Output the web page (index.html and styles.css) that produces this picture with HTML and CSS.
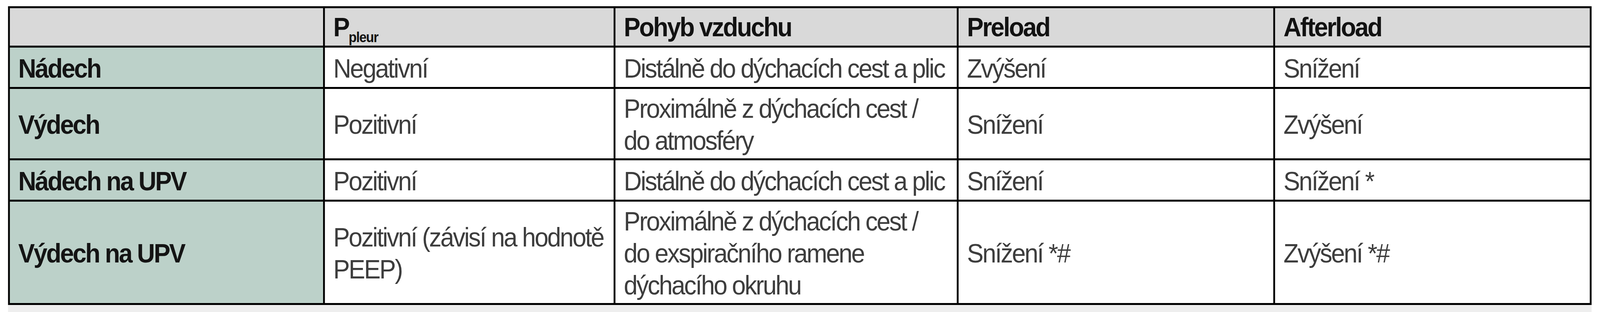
FILE: index.html
```html
<!DOCTYPE html>
<html lang="cs">
<head>
<meta charset="utf-8">
<title>Tabulka</title>
<link rel="stylesheet" href="styles.css">
</head>
<body>
<div class="page">
  <div class="grid">
    <div class="cell head"></div>
    <div class="cell head"><span>P<sub class="sub">pleur</sub></span></div>
    <div class="cell head">Pohyb vzduchu</div>
    <div class="cell head">Preload</div>
    <div class="cell head">Afterload</div>

    <div class="cell label">Nádech</div>
    <div class="cell">Negativní</div>
    <div class="cell">Distálně do dýchacích cest a plic</div>
    <div class="cell">Zvýšení</div>
    <div class="cell">Snížení</div>

    <div class="cell label">Výdech</div>
    <div class="cell">Pozitivní</div>
    <div class="cell"><span>Proximálně z dýchacích cest /<br>do atmosféry</span></div>
    <div class="cell">Snížení</div>
    <div class="cell">Zvýšení</div>

    <div class="cell label">Nádech na UPV</div>
    <div class="cell">Pozitivní</div>
    <div class="cell">Distálně do dýchacích cest a plic</div>
    <div class="cell">Snížení</div>
    <div class="cell">Snížení *</div>

    <div class="cell label">Výdech na UPV</div>
    <div class="cell"><span>Pozitivní (závisí na hodnotě<br>PEEP)</span></div>
    <div class="cell"><span>Proximálně z dýchacích cest /<br>do exspiračního ramene<br>dýchacího okruhu</span></div>
    <div class="cell">Snížení *#</div>
    <div class="cell">Zvýšení *#</div>
  </div>
  <div class="strip"></div>
</div>
</body>
</html>
```
FILE: styles.css
```css
html, body {
  margin: 0;
  background: #ffffff;
  overflow: hidden;
}

/* The table is drawn on a 4378px-wide design canvas; the browser
   viewport is 4096px wide, so the canvas is fitted horizontally. */
.page {
  padding: 16px 0 0 22px;
  transform: scaleX(0.93558);
  transform-origin: 0 0;
}

.grid {
  display: grid;
  box-sizing: border-box;
  width: 4333px;
  grid-template-columns: 857px 790px 934px 861px 861px;
  grid-template-rows: 96px 101px 178px 101px 260px;
  gap: 5px;
  padding: 5px;
  background: #000000;
  font-family: "Liberation Sans", Arial, sans-serif;
}

.cell {
  display: flex;
  align-items: center;
  min-width: 0;
  padding: 4px 23px 0;
  background: #ffffff;
  color: #3d3d3d;
  font-size: 68px;
  line-height: 82px;
  letter-spacing: -3.3px;
  white-space: nowrap;
  overflow: hidden;
}

.head {
  background: #d9d9d9;
  color: #121212;
  font-weight: bold;
  letter-spacing: -3.4px;
  padding-top: 0;
}

.label {
  background: #bcd1c9;
  color: #141414;
  font-weight: bold;
  letter-spacing: -3.4px;
}

.sub {
  font-size: 36px;
  line-height: 0;
  vertical-align: -15px;
  letter-spacing: -1.5px;
}

.strip {
  width: 4333px;
  height: 18px;
  background: #eeeeee;
}
```
